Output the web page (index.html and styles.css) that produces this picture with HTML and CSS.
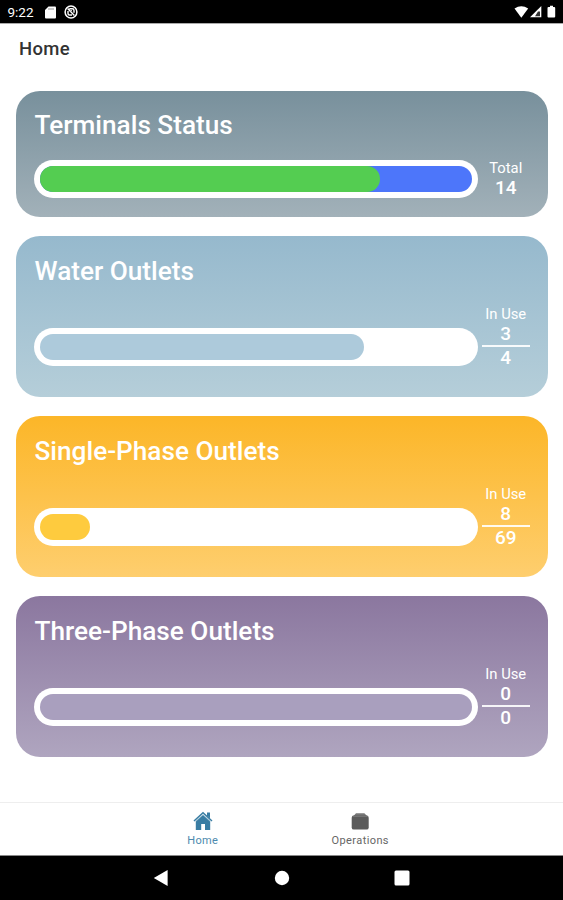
FILE: index.html
```html
<!DOCTYPE html>
<html lang="en">
<head>
<meta charset="utf-8">
<title>Home</title>
<link rel="stylesheet" href="styles.css">
</head>
<body>
<div class="status-bar">
  <span class="time">9:22</span>
  <svg class="sd" width="11" height="13" viewBox="0 0 11 13"><path d="M3.5.5H10q1 0 1 1v10q0 1-1 1H1q-1 0-1-1V4z" fill="#fff"/><path d="M4 2v2M6 2v2M8 2v2" stroke="#777" stroke-width=".8"/></svg>
  <svg class="sync" width="14" height="14" viewBox="0 0 14 14" fill="none" stroke="#fff"><circle cx="7" cy="7" r="5.9" stroke-width="1.5"/><path d="M3.6 3.6l6.8 6.8M5.3 3.8h3q1.7 0 1.7 1.7v2.3M4 6v2.5Q4 10 5.5 10H8M6 6.4l2-.8" stroke-width="1.4"/></svg>
  <span class="spacer"></span>
  <svg width="44" height="14" viewBox="0 0 44 14" fill="#fff"><path d="M.5 3.5Q7.3-1 14.2 3.5L7.3 12.700z"/><path d="M27.300 1v11.300H16z"/><path d="M24 6.500h2v4.800h-5z" fill="#333"/><path d="M34.500 2H36V.8h3V2h1.200q1 0 1 1v8.500q0 1-1 1h-5.700q-1 0-1-1V3q0-1 1-1z"/></svg>
</div>
<header class="app-header">Home</header>
<main class="cards">
  <section class="card terminals">
    <h2>Terminals Status</h2>
    <div class="row">
      <div class="track"><div class="pill rest"><div class="pill used" style="width:78.6%"></div></div></div>
      <div class="stat"><span class="label">Total</span><span class="num">14</span></div>
    </div>
  </section>
  <section class="card water">
    <h2>Water Outlets</h2>
    <div class="row">
      <div class="track"><div class="pill" style="width:75%"></div></div>
      <div class="stat"><span class="label">In Use</span><span class="num">3</span><hr><span class="num">4</span></div>
    </div>
  </section>
  <section class="card single">
    <h2>Single-Phase Outlets</h2>
    <div class="row">
      <div class="track"><div class="pill" style="width:11.6%"></div></div>
      <div class="stat"><span class="label">In Use</span><span class="num">8</span><hr><span class="num">69</span></div>
    </div>
  </section>
  <section class="card three">
    <h2>Three-Phase Outlets</h2>
    <div class="row">
      <div class="track"><div class="pill" style="width:100%"></div></div>
      <div class="stat"><span class="label">In Use</span><span class="num">0</span><hr><span class="num">0</span></div>
    </div>
  </section>
</main>
<nav class="tabs">
  <div class="tab active">
    <svg width="20" height="20" viewBox="0 0 20 20"><path d="M14 1.500h3v6l-3-3z" fill="#397da3"/><path d="M2.800 10L10 3.500l7.200 6.500v9H12v-6H8.200v6H2.800z" fill="#397da3"/><path d="M1 10l9-8.300L19 10" fill="none" stroke="#397da3" stroke-width="1.500"/><path d="M2.600 10.500L10 3.800l7.400 6.700" fill="none" stroke="#c5dbe7" stroke-width=".6"/></svg>
    <span>Home</span>
  </div>
  <div class="tab">
    <svg width="20" height="20" viewBox="0 0 20 20"><path d="M3.500 5L6 2.200h8.400L17 5z" fill="#777"/><rect x="1.700" y="4.600" width="17" height="14" rx="2.200" fill="#5b5b5b"/><path d="M2.500 5.300h15.400" stroke="#888" stroke-width=".7"/></svg>
    <span>Operations</span>
  </div>
</nav>
<footer class="system-nav">
  <svg width="16" height="18" viewBox="0 0 16 18"><path d="M14.600 1v16L.8 9z" fill="#fff"/></svg>
  <svg width="16" height="16" viewBox="0 0 16 16"><circle cx="8" cy="8" r="7.200" fill="#fff"/></svg>
  <svg width="16" height="16" viewBox="0 0 16 16"><rect x=".5" y=".5" width="15" height="15" rx="1.500" fill="#fff"/></svg>
</footer>
</body>
</html>
```
FILE: styles.css
```css
* { box-sizing: border-box; }
body {
  margin: 0;
  height: 900px;
  display: flex;
  flex-direction: column;
  background: #fff;
  font-family: Roboto, "Liberation Sans", sans-serif;
  overflow: hidden;
}
.status-bar {
  height: 23px;
  flex: none;
  display: flex;
  align-items: center;
  padding: 1px 5px 0 7.500px;
  background: #000;
  color: #fff;
  box-shadow: 0 1px #aaa;
}
.time { width: 37.500px; font-size: 13.500px; font-weight: 400; }
.sync { margin-left: 8px; }
.spacer { flex: 1; }
.app-header {
  height: 67.500px;
  flex: none;
  padding: 15.500px 19px 0;
  font-size: 18.500px;
  font-weight: 500;
  line-height: 21px;
  letter-spacing: .3px;
  color: #333;
}
.cards {
  flex: 1;
  display: flex;
  flex-direction: column;
  gap: 19px;
  padding: 0 15px 0 15.500px;
}
.card {
  height: 161px;
  padding: 19.500px 18.500px 0;
  border-radius: 24px;
  color: #fff;
}
.card h2 {
  margin: 0 0 0 .5px;
  font-size: 26.200px;
  font-weight: 500;
  line-height: 30px;
}
.row { display: flex; gap: 4px; margin-top: 20.500px; }
.track {
  flex: 1;
  height: 38px;
  margin-top: 22px;
  padding: 6px;
  border-radius: 19px;
  background: #fff;
}
.pill { height: 26px; border-radius: 13px; }
.stat {
  width: 47.500px;
  display: flex;
  flex-direction: column;
  align-items: center;
}
.label { font-size: 14.800px; line-height: 17px; white-space: nowrap; }
.num { font-size: 19px; font-weight: 500; line-height: 21px; }
hr {
  width: 100%;
  height: 2px;
  margin: 1px 0 0;
  border: 0;
  background: #fff;
  opacity: .9;
}
.terminals { height: 126.500px; background: linear-gradient(#78909c, #a2b1b9); }
.terminals .row { margin-top: 20px; }
.terminals .track { margin-top: 0; }
.rest { background: #4d76fa; }
.used { background: #54cd51; }
.water { background: linear-gradient(#96b9cd, #b5ced9); }
.water .pill { background: #adcadb; }
.single { background: linear-gradient(#fcb628, #fece6e); }
.single .pill { background: #fecb3e; }
.three { background: linear-gradient(#8b779f, #afa5bf); }
.three .pill { background: #a99fbe; }
.tabs {
  height: 53px;
  flex: none;
  display: flex;
  justify-content: center;
  border-top: 1px solid #eee;
}
.tab {
  width: 157.500px;
  display: flex;
  flex-direction: column;
  align-items: center;
  padding-top: 8px;
  color: #666;
  font-size: 11px;
  line-height: 13px;
  letter-spacing: .4px;
}
.tab span { margin-top: 3px; }
.active { color: #4d8aae; }
.system-nav {
  height: 45px;
  flex: none;
  display: flex;
  align-items: center;
  justify-content: center;
  gap: 104.500px;
  background: #000;
  border-top: 1px solid #888;
}
```
